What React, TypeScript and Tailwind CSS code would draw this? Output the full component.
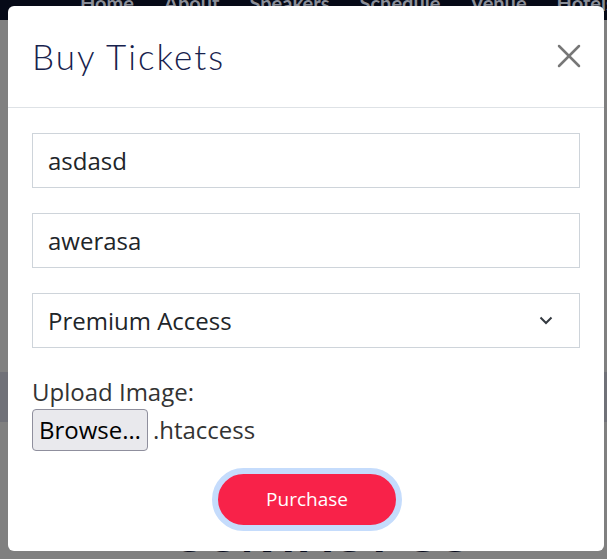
import { X } from "lucide-react";

function Backdrop() {
  return (
    <div className="flex flex-col h-full">
      <div className="h-[46px] bg-[#060a17] flex items-start gap-[30px] pl-[80px] -mt-[12px] text-[20px] font-bold text-[#8a8e98] font-['Lato',sans-serif]">
        <span>Home</span>
        <span>About</span>
        <span>Speakers</span>
        <span>Schedule</span>
        <span>Venue</span>
        <span>Hotels</span>
      </div>
      <div className="flex-1 bg-[#808080] pt-[12px]">
        <div className="h-[340px]" />
        <div className="h-[50px] bg-[#707178]" />
        <div className="h-[91px]" />
        <div className="pl-[172px] text-[46px] font-bold leading-none text-[#070b1c] font-['Liberation_Sans',sans-serif]">
          CONTACT US
        </div>
      </div>
    </div>
  );
}

export default function App() {
  return (
    <div className="relative w-[607px] h-[559px] overflow-hidden font-['Open_Sans',sans-serif]">
      <Backdrop />

      <div className="absolute left-[8px] top-[6px] w-[596px] h-[545px] bg-white rounded-[6px] flex flex-col">
        <div className="h-[102px] border-b border-[#dee2e6] flex items-center justify-between pl-[24px] pr-[15px] shrink-0">
          <h2 className="text-[35px] text-[#17224d] font-['Lato',sans-serif] font-light tracking-[2px] -mt-[1px]">
            Buy Tickets
          </h2>
          <button className="text-[#777] -mt-[1px]">
            <X size={40} strokeWidth={1.5} />
          </button>
        </div>

        <div className="px-[24px] pt-[25px] flex flex-col gap-[25px] text-[24px] text-[#212529]">
          <div className="h-[55px] border border-[#ced4da] flex items-center px-[15px]">asdasd</div>
          <div className="h-[55px] border border-[#ced4da] flex items-center px-[15px]">awerasa</div>
          <div className="h-[55px] border border-[#ced4da] flex items-center justify-between pl-[15px] pr-[26px]">
            <span>Premium Access</span>
            <svg width="14" height="9" viewBox="0 0 14 9" fill="none">
              <path d="M1.5 1.5 L7 7 L12.5 1.5" stroke="#343a40" strokeWidth="2" />
            </svg>
          </div>
        </div>

        <div className="px-[24px] pt-[29px] text-[24px] text-[#333]">
          <div className="leading-[30px]">Upload Image:</div>
          <div className="flex items-center gap-[5px] mt-[2px]">
            <span className="h-[42px] px-[6px] flex items-center bg-[#e9e9ed] border border-[#8f8f9d] rounded-[4px] text-[#000]">
              Browse…
            </span>
            <span>.htaccess</span>
          </div>
        </div>

        <div className="flex justify-center pt-[17px] pl-[18px]">
          <button className="w-[190px] h-[63px] rounded-full bg-[#f82249] text-white text-[19px] border-[6px] border-[#c5dcfc] -ml-[16px]">
            Purchase
          </button>
        </div>
      </div>
    </div>
  );
}
